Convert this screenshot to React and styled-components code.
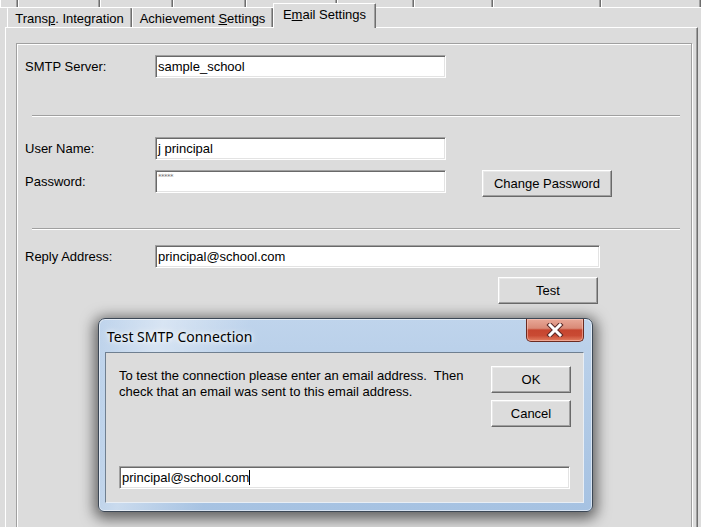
import React from "react";
import styled, { createGlobalStyle } from "styled-components";

const GlobalStyle = createGlobalStyle`
  html, body {
    margin: 0;
    padding: 0;
    background: #dcdcdc;
  }
`;

const upperTabs = [0, 18, 100, 173, 246, 337, 414, 493, 601, 701];

const Screen = styled.div`
  position: relative;
  width: 701px;
  height: 527px;
  overflow: hidden;
  background: #dcdcdc;
  font-family: "Liberation Sans", Arial, sans-serif;
  font-size: 13px;
  color: #000;
`;

const UpperRow = styled.div`
  display: flex;
  height: 7px;
  border-bottom: 1px solid #fff;
`;

const UpperTab = styled.div`
  flex: none;
  box-sizing: border-box;
  width: ${(p) => p.$w}px;
  border-left: 1px solid #fff;
  border-right: 1px solid #6e6e6e;
  box-shadow: inset -1px 0 0 #a0a0a0;
`;

const TabRow = styled.div`
  display: flex;
  align-items: flex-end;
  height: 19px;
  padding-left: 7px;
`;

const Tab = styled.div`
  flex: none;
  box-sizing: border-box;
  width: ${(p) => p.$w}px;
  height: ${(p) => (p.$active ? 25 : 19)}px;
  display: flex;
  align-items: center;
  justify-content: center;
  padding-bottom: ${(p) => (p.$active ? 3 : 0)}px;
  padding-top: ${(p) => (p.$active ? 0 : 1)}px;
  background: #dcdcdc;
  border-left: 1px solid #fff;
  border-top: ${(p) => (p.$active ? "1px solid #fff" : "none")};
  border-right: 1px solid #6e6e6e;
  box-shadow: inset -1px 0 0 #a0a0a0;
  white-space: nowrap;
  position: relative;
  z-index: ${(p) => (p.$active ? 2 : 1)};
  margin-bottom: ${(p) => (p.$active ? -1 : 0)}px;
  border-radius: 1px 1px 0 0;
`;

const Panel = styled.div`
  margin-left: 5px;
  width: 693px;
  height: 560px;
  box-sizing: border-box;
  border-top: 1px solid #fff;
  border-left: 1px solid #fff;
  border-right: 1px solid #6e6e6e;
  box-shadow: inset -1px 0 0 #a0a0a0;
  padding: 15px 5px 0 10px;
`;

const GroupBox = styled.div`
  height: 560px;
  border: 1px solid #a0a0a0;
  box-shadow: inset 1px 1px 0 #fff, 1px 1px 0 #fff;
  padding: 11px 0 0 8px;
`;

const Row = styled.div`
  display: flex;
  align-items: flex-start;
  margin-top: ${(p) => p.$mt || 0}px;
`;

const Label = styled.div`
  flex: none;
  width: 130px;
  height: 23px;
  line-height: 23px;
  white-space: nowrap;
`;

const Field = styled.div`
  flex: none;
  box-sizing: border-box;
  width: ${(p) => p.$w}px;
  height: 23px;
  background: #fff;
  border: 1px solid;
  border-color: #a0a0a0 #fff #fff #a0a0a0;
  box-shadow: inset 1px 1px 0 #696969, inset -1px -1px 0 #e3e3e3;
  padding-left: 2px;
  line-height: 21px;
  white-space: nowrap;
  overflow: hidden;
`;

const Dots = styled.span`
  display: block;
  font-family: "DejaVu Sans", sans-serif;
  font-size: 7px;
  line-height: 8px;
  letter-spacing: -0.5px;
  color: #707070;
  padding-top: 2px;
`;

const Separator = styled.div`
  margin-left: 7px;
  margin-top: ${(p) => p.$mt}px;
  width: 648px;
  border-top: 1px solid #a0a0a0;
  border-bottom: 1px solid #fff;
`;

const Button = styled.div`
  flex: none;
  box-sizing: border-box;
  width: ${(p) => p.$w}px;
  height: 27px;
  margin-left: ${(p) => p.$ml || 0}px;
  display: flex;
  align-items: center;
  justify-content: center;
  background: #dcdcdc;
  border: 1px solid;
  border-color: #fff #696969 #696969 #fff;
  box-shadow: inset -1px -1px 0 #a0a0a0, inset 1px 1px 0 #e8e8e8;
  white-space: nowrap;
`;

const Dialog = styled.div`
  position: absolute;
  left: 98px;
  top: 318px;
  width: 495px;
  height: 194px;
  box-sizing: border-box;
  display: flex;
  flex-direction: column;
  padding: 0 8px 8px 6px;
  border: 1px solid #3c4856;
  border-radius: 7px 7px 6px 6px;
  background:
    linear-gradient(104deg, rgba(255, 255, 255, 0) 0%, rgba(255, 255, 255, 0.4) 12%, rgba(255, 255, 255, 0) 28%),
    linear-gradient(180deg, #bfd4ec 0%, #b4cce7 40%, #a6c2e2 100%);
  box-shadow: 0 3px 14px 4px rgba(0, 0, 0, 0.55), inset 0 0 0 1px rgba(255, 255, 255, 0.55);
`;

const TitleBar = styled.div`
  flex: none;
  height: 33px;
  display: flex;
  justify-content: space-between;
  align-items: flex-start;
`;

const Title = styled.div`
  padding: 8px 0 0 2px;
  font-family: "Noto Sans", "Open Sans", sans-serif;
  font-size: 14px;
  line-height: 20px;
  color: #000;
  text-shadow: 0 0 8px #fff, 0 0 4px #fff;
`;

const CloseButton = styled.div`
  box-sizing: border-box;
  width: 58px;
  height: 23px;
  display: flex;
  align-items: center;
  justify-content: center;
  border: 1px solid #6b2a20;
  border-top: none;
  border-radius: 0 0 5px 5px;
  background: linear-gradient(180deg, #e8a898 0%, #d98a77 42%, #c6452f 50%, #c94a33 75%, #e27f62 100%);
  box-shadow: inset 0 0 0 1px rgba(255, 210, 200, 0.5);
`;

const Content = styled.div`
  flex: 1;
  display: flex;
  flex-direction: column;
  justify-content: space-between;
  background: #dcdcdc;
  border: 1px solid;
  border-color: #6f7f90 #e8eef5 #e8eef5 #6f7f90;
  padding: 12px 12px 13px 13px;
`;

const DialogTop = styled.div`
  display: flex;
  justify-content: space-between;
  align-items: flex-start;
`;

const Message = styled.div`
  margin-top: 3px;
  line-height: 16px;
  white-space: pre;
`;

const ButtonStack = styled.div`
  display: flex;
  flex-direction: column;
  gap: 7px;
  margin-top: 1px;
`;

const Caret = styled.span`
  display: inline-block;
  width: 0;
  height: 15px;
  border-right: 1px solid #000;
  vertical-align: -3px;
`;

export default function App() {
  return (
    <>
      <GlobalStyle />
      <Screen>
        <UpperRow>
          {upperTabs.slice(0, -1).map((x, i) => (
            <UpperTab key={x} $w={upperTabs[i + 1] - x} />
          ))}
        </UpperRow>
        <TabRow>
          <Tab $w={125}>
            <span>Trans<u>p</u>. Integration</span>
          </Tab>
          <Tab $w={141}>
            <span>Achievement <u>S</u>ettings</span>
          </Tab>
          <Tab $w={103} $active>
            <span>E<u>m</u>ail Settings</span>
          </Tab>
        </TabRow>
        <Panel>
          <GroupBox>
            <Row>
              <Label>SMTP Server:</Label>
              <Field $w={291}>sample_school</Field>
            </Row>
            <Separator $mt={37} />
            <Row $mt={20}>
              <Label>User Name:</Label>
              <Field $w={291}>j principal</Field>
            </Row>
            <Row $mt={10}>
              <Label>Password:</Label>
              <Field $w={291}>
                <Dots>*****</Dots>
              </Field>
              <Button $w={130} $ml={36}>
                Change Password
              </Button>
            </Row>
            <Separator $mt={31} />
            <Row $mt={15}>
              <Label>Reply Address:</Label>
              <Field $w={445}>principal@school.com</Field>
            </Row>
            <Row $mt={9}>
              <Button $w={100} $ml={473}>
                Test
              </Button>
            </Row>
          </GroupBox>
        </Panel>

        <Dialog>
          <TitleBar>
            <Title>Test SMTP Connection</Title>
            <CloseButton>
              <svg width="18" height="14" viewBox="0 0 18 14">
                <path
                  d="M4 2 L14 12 M14 2 L4 12"
                  stroke="#5a2a28"
                  strokeWidth="5"
                  strokeLinecap="square"
                  fill="none"
                />
                <path
                  d="M4 2 L14 12 M14 2 L4 12"
                  stroke="#fff"
                  strokeWidth="3"
                  strokeLinecap="square"
                  fill="none"
                />
              </svg>
            </CloseButton>
          </TitleBar>
          <Content>
            <DialogTop>
              <Message>
                {"To test the connection please enter an email address.  Then\ncheck that an email was sent to this email address."}
              </Message>
              <ButtonStack>
                <Button $w={80}>OK</Button>
                <Button $w={80}>Cancel</Button>
              </ButtonStack>
            </DialogTop>
            <Field $w={451}>
              principal@school.com
              <Caret />
            </Field>
          </Content>
        </Dialog>
      </Screen>
    </>
  );
}
